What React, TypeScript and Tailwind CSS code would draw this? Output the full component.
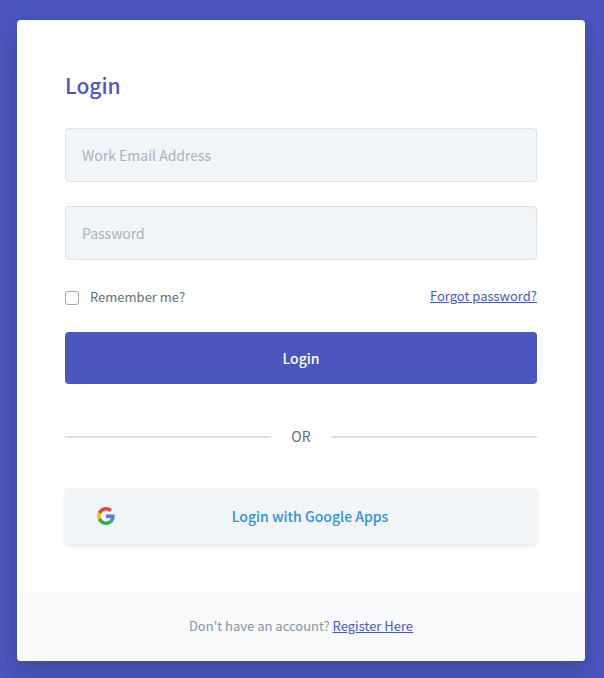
import React from 'react';

const fontClass = "font-['Noto_Sans_CJK_SC','Noto_Sans',sans-serif]";

const GoogleIcon: React.FC = () => (
  <svg className="h-[18px] w-[18px]" viewBox="0 0 48 48" aria-hidden="true">
    <path fill="#EA4335" d="M24 9.5c3.54 0 6.71 1.22 9.21 3.6l6.85-6.85C35.9 2.38 30.47 0 24 0 14.62 0 6.51 5.38 2.56 13.22l7.98 6.19C12.43 13.72 17.74 9.5 24 9.5z" />
    <path fill="#4285F4" d="M46.98 24.55c0-1.57-.15-3.09-.38-4.55H24v9.02h12.94c-.58 2.96-2.26 5.48-4.78 7.18l7.73 6c4.51-4.18 7.09-10.36 7.09-17.65z" />
    <path fill="#FBBC05" d="M10.53 28.59c-.48-1.45-.76-2.99-.76-4.59s.27-3.14.76-4.59l-7.98-6.19C.92 16.46 0 20.12 0 24s.92 7.54 2.56 10.78l7.97-6.19z" />
    <path fill="#34A853" d="M24 48c6.48 0 11.93-2.13 15.89-5.81l-7.73-6c-2.15 1.45-4.92 2.3-8.16 2.3-6.26 0-11.57-4.22-13.47-9.91l-7.98 6.19C6.51 42.62 14.62 48 24 48z" />
  </svg>
);

type FieldProps = {
  id: string;
  type: string;
  label: string;
};

const Field: React.FC<FieldProps> = ({ id, type, label }) => (
  <input
    id={id}
    type={type}
    aria-label={label}
    placeholder={label}
    className="mb-6 block h-[54px] w-full rounded border border-[#dae1e7] bg-[#f1f5f8] px-4 text-sm text-[#606f7b] placeholder:text-[#a9b2bb] focus:outline-none"
  />
);

export default function App() {
  return (
    <div className={`min-h-screen bg-[#4957bf] pt-5 pr-[19px] pb-[17px] pl-[17px] ${fontClass}`}>
      <main className="overflow-hidden rounded bg-white shadow-[0_15px_30px_0_rgba(0,0,0,0.11),0_5px_15px_0_rgba(0,0,0,0.08)]">
        <form className="px-12 pt-12 pb-12" onSubmit={(e) => e.preventDefault()}>
          <h1 className="mb-[26px] text-[21px] leading-[34px] font-medium text-[#4957bf]">Login</h1>

          <Field id="email" type="email" label="Work Email Address" />
          <Field id="password" type="password" label="Password" />

          <div className="flex h-6 items-start justify-between text-[13px] leading-6">
            <div className="mt-px flex items-center">
              <input
                id="remember"
                type="checkbox"
                className="mt-0.5 mr-[11px] h-[14px] w-[14px] appearance-none rounded-[3px] border border-[#a5a5a5] bg-white checked:bg-[#4957bf]"
              />
              <label htmlFor="remember" className="text-[#606f7b]">Remember me?</label>
            </div>
            <a href="#" className="text-[#4957bf] underline">Forgot password?</a>
          </div>

          <button
            type="submit"
            className="mt-6 block h-[52px] w-full rounded bg-[#4957bf] text-sm font-medium text-white"
          >
            Login
          </button>

          {/* Divider */}
          <div className="my-10 flex items-center gap-5 text-sm leading-6 text-[#606f7b]">
            <div className="mt-0.5 h-0.5 flex-1 bg-[#dedede]" />
            <span>OR</span>
            <div className="mt-0.5 h-0.5 flex-1 bg-[#dedede]" />
          </div>

          <button
            type="button"
            className="flex h-14 w-full items-center rounded bg-[#f1f5f8] px-8 text-sm font-medium text-[#3490dc] shadow-[0_2px_4px_0_rgba(0,0,0,0.1)]"
          >
            <GoogleIcon />
            <span className="flex-1 text-center">Login with Google Apps</span>
          </button>
        </form>

        <footer className="bg-[#f8fafc] pt-[22px] pb-[23px] text-center text-[13px] leading-6 text-[#8795a1]">
          Don't have an account? <a href="#" className="text-[#4957bf] underline">Register Here</a>
        </footer>
      </main>
    </div>
  );
}
